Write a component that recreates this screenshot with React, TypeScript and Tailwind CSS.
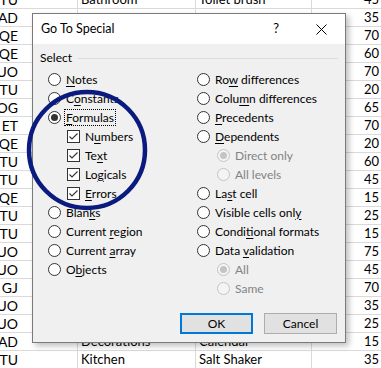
import React from "react";

const leftCol = ["TU","AD","QE","QE","UO","TU","OG","ET","QE","TU","TU","QE","TU","TU","UO","UO","GJ","UO","UO","AD","TU"];
const nums = ["45","35","70","60","70","20","65","70","20","60","45","15","25","15","75","45","70","35","25","15","35"];
const colB: Record<number,string> = {0:"Bathroom",19:"Decorations",20:"Kitchen"};
const colC: Record<number,string> = {0:"Toilet brush",19:"Calendar",20:"Salt Shaker"};

function Radio({ checked = false, disabled = false }: { checked?: boolean; disabled?: boolean }) {
  return (
    <span
      className={
        "flex h-[13px] w-[13px] shrink-0 items-center justify-center rounded-full border " +
        (disabled ? "border-[#c4c4c4] bg-[#f4f4f4]" : "border-[#333333] bg-white")
      }
    >
      {checked && (
        <span className={"h-[7px] w-[7px] rounded-full " + (disabled ? "bg-[#c4c4c4]" : "bg-[#333333]")} />
      )}
    </span>
  );
}

function Check() {
  return (
    <span className="flex h-[13px] w-[13px] shrink-0 items-center justify-center border border-[#333333] bg-white">
      <svg width="11" height="11" viewBox="0 0 11 11">
        <path d="M1.5 5.5 L4 8 L9.5 2.5" fill="none" stroke="#333333" strokeWidth="1.1" />
      </svg>
    </span>
  );
}

function Label({ pre, u, post, disabled }: { pre: string; u: string; post: string; disabled?: boolean }) {
  return (
    <span className={"whitespace-nowrap leading-none " + (disabled ? "text-[#838383]" : "text-black")}>
      {pre}
      {u && <span className="underline underline-offset-[2px]">{u}</span>}
      {post}
    </span>
  );
}

function RadioRow({ pre, u, post, checked, disabled, indent, focus }: { pre: string; u: string; post: string; checked?: boolean; disabled?: boolean; indent?: boolean; focus?: boolean }) {
  return (
    <div className={"flex h-[19px] items-center " + (indent ? "pl-[20px]" : "")}>
      <Radio checked={checked} disabled={disabled} />
      <span className={"ml-[4px] flex h-[15px] items-center px-[1px] " + (focus ? "outline outline-1 outline-dotted outline-black" : "")}>
        <Label pre={pre} u={u} post={post} disabled={disabled} />
      </span>
    </div>
  );
}

function CheckRow({ pre, u, post }: { pre: string; u: string; post: string }) {
  return (
    <div className="flex h-[19px] items-center pl-[19px]">
      <Check />
      <span className="ml-[5px] flex items-center">
        <Label pre={pre} u={u} post={post} />
      </span>
    </div>
  );
}

export default function App() {
  return (
    <div className="relative h-[368px] w-[381px] overflow-hidden bg-white" style={{ fontFamily: "Lato, sans-serif" }}>
      {/* spreadsheet background */}
      <div className="mt-[-9px] flex flex-col text-[13px] text-black">
        {leftCol.map((a, i) => (
          <div key={i} className="flex h-[18px] border-b border-[#dadada]">
            <div className="relative w-[78px] shrink-0 overflow-hidden border-r border-[#dadada]">
              <span className="absolute right-[59px] top-0 whitespace-nowrap text-[14px] leading-[17px]">{a}</span>
            </div>
            <div className="w-[118px] shrink-0 overflow-hidden whitespace-nowrap border-r border-[#dadada] pl-[3px] leading-[17px]">{colB[i] ?? ""}</div>
            <div className="w-[116px] shrink-0 overflow-hidden whitespace-nowrap border-r border-[#dadada] pl-[3px] leading-[17px]">{colC[i] ?? ""}</div>
            <div className="w-[69px] shrink-0 pr-[2px] text-right leading-[17px]">{nums[i]}</div>
          </div>
        ))}
      </div>

      {/* dialog */}
      <div className="absolute left-[32px] top-[13px] flex h-[330px] w-[314px] flex-col border border-[#7a7a7a] bg-[#f0f0f0] text-[12px] shadow-[3px_3px_6px_rgba(0,0,0,0.25)]">
        <div className="flex h-[30px] shrink-0 items-center bg-white pl-[8px] pr-[18px]">
          <span className="text-[12.5px] text-black">Go To Special</span>
          <span className="ml-auto mr-[37px] text-[13px] text-black">?</span>
          <svg width="11" height="11" viewBox="0 0 11 11">
            <path d="M0.5 0.5 L10.5 10.5 M10.5 0.5 L0.5 10.5" stroke="#000" strokeWidth="1" />
          </svg>
        </div>
        <div className="flex flex-1 flex-col px-[6px] pt-[6px]">
          <div className="flex h-[16px] items-center">
            <span className="pl-[1px] text-black">Select</span>
            <div className="ml-[6px] mr-[1px] h-px flex-1 bg-[#dcdcdc]" />
          </div>
          <div className="mt-[4px] flex">
            <div className="flex w-[158px] flex-col pl-[9px]">
              <RadioRow pre="" u="N" post="otes" />
              <RadioRow pre="C" u="o" post="nstants" />
              <RadioRow pre="" u="F" post="ormulas" checked focus />
              <CheckRow pre="N" u="u" post="mbers" />
              <CheckRow pre="Te" u="x" post="t" />
              <CheckRow pre="Lo" u="g" post="icals" />
              <CheckRow pre="" u="E" post="rrors" />
              <RadioRow pre="Blan" u="k" post="s" />
              <RadioRow pre="Current " u="r" post="egion" />
              <RadioRow pre="Current " u="a" post="rray" />
              <RadioRow pre="O" u="b" post="jects" />
            </div>
            <div className="flex flex-col">
              <RadioRow pre="Ro" u="w" post=" differences" />
              <RadioRow pre="Colu" u="m" post="n differences" />
              <RadioRow pre="" u="P" post="recedents" />
              <RadioRow pre="" u="D" post="ependents" />
              <RadioRow pre="" u="" post="Direct only" checked disabled indent />
              <RadioRow pre="" u="" post="All levels" disabled indent />
              <RadioRow pre="La" u="s" post="t cell" />
              <RadioRow pre="Visible cells onl" u="y" post="" />
              <RadioRow pre="Condi" u="t" post="ional formats" />
              <RadioRow pre="Data " u="v" post="alidation" />
              <RadioRow pre="" u="" post="All" checked disabled indent />
              <RadioRow pre="" u="" post="Same" disabled indent />
            </div>
          </div>
          <div className="mt-auto mb-[8px] flex justify-end gap-[11px] pr-[2px]">
            <button className="flex h-[21px] w-[73px] items-center justify-center border-2 border-[#0078d7] bg-[#e1e1e1] text-[12px] text-black">OK</button>
            <button className="flex h-[21px] w-[73px] items-center justify-center border border-[#adadad] bg-[#e1e1e1] text-[12px] text-black">Cancel</button>
          </div>
        </div>
      </div>

      {/* annotation circle */}
      <svg className="pointer-events-none absolute left-0 top-0" width="381" height="368">
        <circle cx="87" cy="150" r="58" fill="none" stroke="#0a1a7e" strokeWidth="4.5" />
      </svg>
    </div>
  );
}
